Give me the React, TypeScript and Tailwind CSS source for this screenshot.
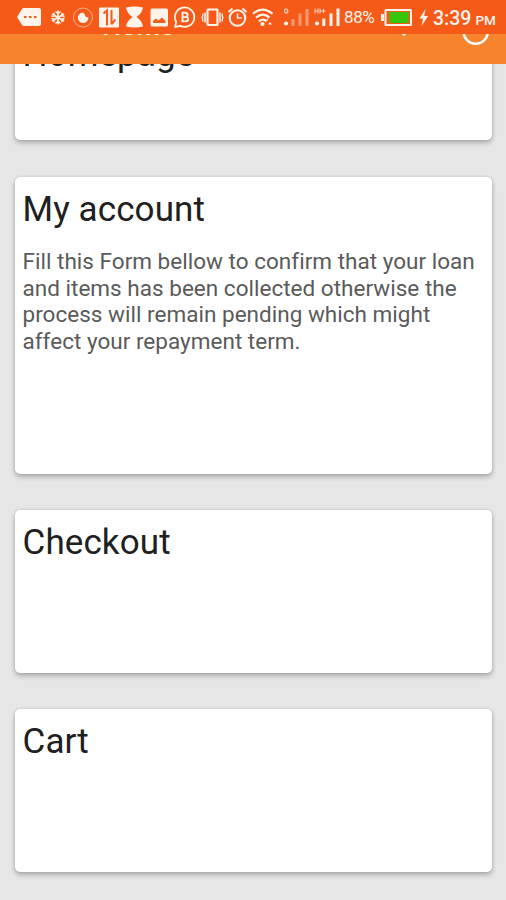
import type { ReactNode } from "react";

type CardProps = {
  title: string;
  text?: string;
  className: string;
};

const cards: CardProps[] = [
  { title: "Homepage", className: "h-[118px] mb-[37px]" },
  {
    title: "My account",
    text: "Fill this Form bellow to confirm that your loan and items has been collected otherwise the process will remain pending which might affect your repayment term.",
    className: "h-[297px] mb-9",
  },
  { title: "Checkout", className: "h-[163px] mb-9" },
  { title: "Cart", className: "h-[163px]" },
];

function Card({ title, text, className }: CardProps) {
  return (
    <section
      className={`shrink-0 rounded-[5px] bg-white pl-[7.5px] pt-3 shadow-[0_3px_5px_rgba(0,0,0,0.24),0_0_3px_rgba(0,0,0,0.14)] ${className}`}
    >
      <h2 className="text-[35px] leading-[42px] tracking-[0.1px] text-[#202020]">{title}</h2>
      {text && (
        <p className="mt-[17px] w-[460px] text-[22.5px] leading-[26.7px] tracking-[0.02px] text-[#5a5a5a]">
          {text}
        </p>
      )}
    </section>
  );
}

// Every status icon shares the bar's coordinates, so x is where its slot starts.
function Icon({ x, width, children }: { x: number; width: number; children: ReactNode }) {
  return (
    <svg
      width={width}
      height="34"
      viewBox={`${x} 0 ${width} 34`}
      fill="none"
      stroke="#fff4ec"
      strokeWidth="1.6"
      className="shrink-0"
    >
      {children}
    </svg>
  );
}

function StatusBar() {
  return (
    <div className="flex h-[34px] items-center bg-[#f55a19] pl-4 text-[#fff4ec]">
      <Icon x={16} width={30}>
        <path d="M17 17l5-8q.6-1 2-1h15q2 0 2 2v14q0 2-2 2H24q-1.400 0-2-1z" fill="#fff4ec" stroke="none" />
        <path d="M24 17h2.500M29 17h2.500M34 17h2.500" stroke="#f55a19" strokeWidth="1.800" />
      </Icon>
      <Icon x={46} width={26}>
        <path d="M58 10.500v14M52 14l12 7M52 21l12-7" strokeWidth="1.700" />
        <path d="M55.500 11.500l2.500 2.300 2.500-2.300M55.500 23.500l2.500-2.300 2.500 2.300M51.500 16.500l3.200-.8-.9-3M64.500 16.500l-3.200-.8.9-3M51.500 18.500l3.200.8-.9 3M64.500 18.500l-3.200.8.9 3" strokeWidth="1.300" />
      </Icon>
      <Icon x={72} width={25}>
        <circle cx="83" cy="17.500" r="9.500" strokeWidth="1" opacity=".55" />
        <path d="M83 12.500a5.300 5.300 0 1 0 5.300 4.500q-2 .5-2.800-.5t-.5-2.500q-1 0-2-1.500z" fill="#fff4ec" stroke="none" />
      </Icon>
      <Icon x={97} width={27}>
        <rect x="99" y="7.500" width="20" height="20" rx="1" fill="#fff4ec" stroke="none" />
        <path d="M103.500 13.500l3.500-3v15M111.500 10v14.500M112 24l3.300-4.500" stroke="#f55a19" strokeWidth="2" />
      </Icon>
      <Icon x={124} width={24}>
        <path d="M126 7.500q8-2 17 0-1 6-6.500 9.500 5.500 3.500 6.500 9.500-8.500 2-17 0 1-6 6.500-9.500-5.500-3.500-6.500-9.500z" fill="#fff4ec" stroke="none" />
      </Icon>
      <Icon x={148} width={24}>
        <rect x="150.500" y="8.500" width="17.500" height="18" rx="1.500" fill="#fff4ec" stroke="none" />
        <path d="M153 23v-2l3-2.500 2.500 2 3.500-3 3.500 3.500v2z" fill="#f55a19" stroke="none" />
      </Icon>
      <Icon x={172} width={28}>
        <path d="M175 27l1.200-5a9.700 9.700 0 1 1 4 3.800z" strokeWidth="1.800" strokeLinejoin="round" />
        <path d="M182.500 12.800v8.600h3q2.700 0 2.700-2.300 0-2-2.700-2h-3 2.500q2.500 0 2.500-2.200 0-2.100-2.500-2.100z" strokeWidth="1.900" />
      </Icon>
      <Icon x={200} width={24}>
        <rect x="207.500" y="9.500" width="10" height="15.500" rx=".5" strokeWidth="2.100" />
        <path d="M205 12.500v10M220 12.500v10" strokeWidth="1.500" />
        <path d="M202.800 13.500v2.500l-.8 1.500.8 1.500v2.500M222.200 13.500v2.500l.8 1.500-.8 1.500v2.500" strokeWidth="1.300" />
      </Icon>
      <Icon x={224} width={26}>
        <circle cx="237.500" cy="18" r="7.800" strokeWidth="2" />
        <path d="M237.500 13.500V18h4.300" strokeWidth="1.600" />
        <path d="M228.500 12l4-3.500M246.500 12l-4-3.500" strokeWidth="1.900" />
      </Icon>
      <Icon x={250} width={31}>
        <path d="M253 13.800q9.500-8.500 19.500 0M256 17.600q7-6 13.500 0M259 21.300q4-3.500 7.500 0" strokeWidth="2.200" />
        <circle cx="262.500" cy="24" r="2.100" fill="#fff4ec" stroke="none" />
        <path d="M265.500 20.500l2.500-2.500v2.500zM268 24.500l2-2.500 2.300 2.500z" fill="#fff4ec" stroke="none" />
      </Icon>
      <Icon x={281} width={31}>
        <path d="M287.800 9.500q-3.300-1.500-3.300 1.500t3.300 1.500v-1.800h-1.500" strokeWidth="1.100" opacity=".8" />
        <circle cx="286" cy="23.500" r="2.100" fill="#fff4ec" stroke="none" />
        <path d="M293 26v-7M300 26V13.500M307 26V9" strokeWidth="3" opacity=".42" />
      </Icon>
      <Icon x={312} width={31}>
        <path d="M315 8.500v5M318 8.500v5M315 11h3M320 8.500v5M320 11h5.500M323.500 8.800v4.400" strokeWidth="1" opacity=".8" />
        <circle cx="317" cy="23.500" r="2.100" fill="#fff4ec" stroke="none" />
        <path d="M323.800 26v-7.500M331 26V13.500M338 26V8.500" strokeWidth="3" />
      </Icon>
      <span className="ml-px mt-[2px] w-[37px] whitespace-nowrap text-[17px] tracking-[-0.4px]">88%</span>
      <Icon x={381} width={36}>
        <path d="M381 14h3v7h-3z" fill="#fff4ec" stroke="none" />
        <rect x="385.500" y="10" width="25.500" height="15" rx=".5" strokeWidth="2" />
        <rect x="389.500" y="12" width="19" height="11" fill="#35c60b" stroke="none" />
      </Icon>
      <Icon x={417} width={15}>
        <path d="M425.500 9l-6 9.500h3.500l-1.500 7.500 6.700-10h-4z" fill="#fff4ec" stroke="none" />
      </Icon>
      <span className="ml-px mt-[3px] whitespace-nowrap text-[19.500px] font-medium">3:39</span>
      <span className="ml-1 mt-[7px] whitespace-nowrap text-[13.500px] font-medium">PM</span>
    </div>
  );
}

export default function App() {
  return (
    <main className="flex h-[900px] w-[506px] flex-col overflow-hidden bg-[#e6e6e6] font-['Roboto',sans-serif]">
      <header className="shrink-0">
        <StatusBar />
        <div className="flex h-[30px] items-start overflow-hidden bg-[#f5842c] pl-[102px] text-white">
          <span className="-mt-6 w-[298px] text-[27px] font-medium leading-8">Home</span>
          <svg width="100" height="30" viewBox="400 34 100 30" fill="none" stroke="#fff" className="shrink-0">
            <circle cx="404" cy="33.500" r="2" fill="#fff" stroke="none" />
            <circle cx="475.700" cy="31.500" r="12.200" strokeWidth="2.600" />
          </svg>
        </div>
      </header>

      <div className="flex-1 overflow-hidden pl-[15px] pr-[14px]">
        <div className="-mt-[42px] flex flex-col">
          {cards.map((card) => (
            <Card key={card.title} {...card} />
          ))}
        </div>
      </div>
    </main>
  );
}
